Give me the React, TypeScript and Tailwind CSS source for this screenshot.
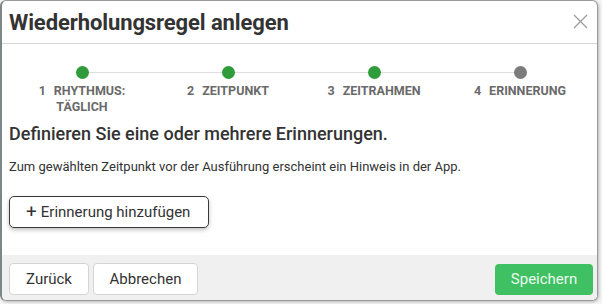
import React from "react";

const steps = [
  { n: "1", label: "RHYTHMUS: TÄGLICH", done: true, w: "w-[100px]" },
  { n: "2", label: "ZEITPUNKT", done: true, w: "whitespace-nowrap" },
  { n: "3", label: "ZEITRAHMEN", done: true, w: "whitespace-nowrap" },
  { n: "4", label: "ERINNERUNG", done: false, w: "whitespace-nowrap" },
];

export default function App() {
  return (
    <div
      className="w-[602px] h-[304px] bg-[#f4f4f4] overflow-hidden"
      style={{ fontFamily: "Roboto, 'Liberation Sans', sans-serif" }}
    >
      <div className="w-[598px] h-[301px] bg-white border border-[#9a9a9a] border-l-2 border-l-[#7d8686] rounded-[6px] overflow-hidden flex flex-col shadow-[1px_1px_3px_rgba(0,0,0,0.25)]">
        {/* header */}
        <div className="h-[43px] shrink-0 border-b border-[#d6d6d6] flex items-center justify-between pl-[7px] pr-[9px]">
          <h1 className="text-[22px] font-bold text-[#333333] leading-none tracking-[-0.1px] mt-[1px]">
            Wiederholungsregel anlegen
          </h1>
          <svg width="15" height="15" viewBox="0 0 15 15" className="mt-[-1px]">
            <path d="M1 1L14 14M14 1L1 14" stroke="#9a9a9a" strokeWidth="1.2" />
          </svg>
        </div>

        {/* stepper */}
        <div className="relative ml-[7px] w-[584px] mt-[22px] grid grid-cols-4">
          <div className="absolute top-[6px] left-[73px] right-[73px] h-px bg-[#dedede]" />
          {steps.map((s) => (
            <div key={s.n} className="relative flex flex-col items-center">
              <div
                className={
                  s.done
                    ? "w-[13px] h-[13px] rounded-full bg-[#2e9c3a]"
                    : "w-[13px] h-[13px] rounded-full bg-[#7c7c7c]"
                }
              />
              <div
                className={
                  "mt-[4px] text-center text-[12.5px] font-bold leading-[16px] text-[#6a6a6a] " +
                  s.w
                }
              >
                <span className="mr-[8px]">{s.n}</span>
                {s.label}
              </div>
            </div>
          ))}
        </div>

        {/* content */}
        <div className="px-[7px] mt-[8px]">
          <h2 className="text-[18px] font-medium text-[#333333] leading-[22px]">
            Definieren Sie eine oder mehrere Erinnerungen.
          </h2>
          <p className="mt-[14px] text-[13px] text-[#333333] leading-[16px]">
            Zum gewählten Zeitpunkt vor der Ausführung erscheint ein Hinweis in der App.
          </p>
          <button className="mt-[21px] w-[200px] h-[32px] rounded-[5px] border border-[#3a3a3a] bg-white text-[15px] text-[#333333] flex items-center pl-[16px] shadow-[0_2px_4px_rgba(0,0,0,0.25)]">
            <span className="text-[19px] leading-none mr-[4px] mt-[-2px]">+</span>
            Erinnerung hinzufügen
          </button>
        </div>

        {/* footer */}
        <div className="mt-auto h-[45px] bg-[#f0f0f0] flex items-center justify-between pl-[7px] pr-[4px] pt-[3px]">
          <div className="flex gap-[4px]">
            <button className="w-[80px] h-[32px] rounded-[4px] border border-[#d4d4d4] bg-white text-[15px] text-[#333333]">
              Zurück
            </button>
            <button className="w-[105px] h-[32px] rounded-[4px] border border-[#d4d4d4] bg-white text-[15px] text-[#333333]">
              Abbrechen
            </button>
          </div>
          <button className="w-[98px] h-[31px] rounded-[4px] bg-[#3fc062] text-[15px] text-[#eafaee]">
            Speichern
          </button>
        </div>
      </div>
    </div>
  );
}
